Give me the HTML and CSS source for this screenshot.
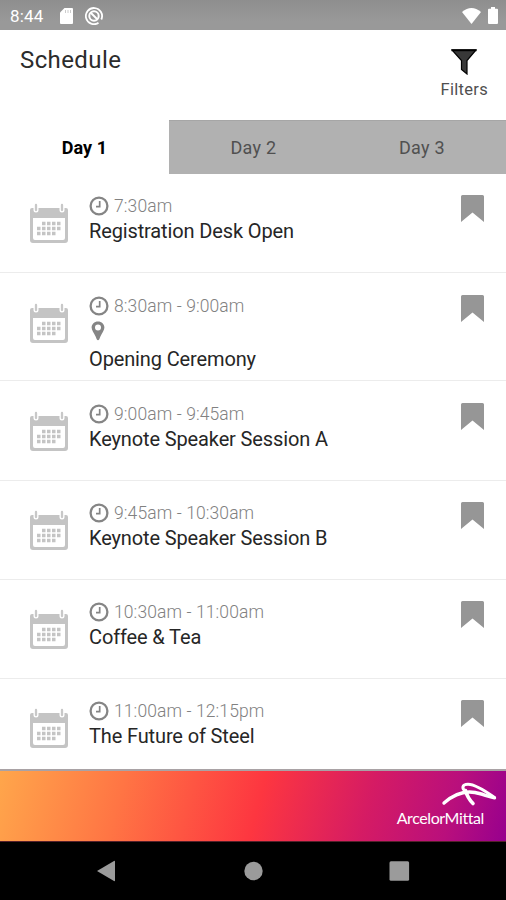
FILE: index.html
```html
<!DOCTYPE html>
<html lang="en">
<head>
<meta charset="utf-8">
<title>Schedule</title>
<link rel="stylesheet" href="styles.css">
</head>
<body>
<svg class="sprite" aria-hidden="true">
  <symbol id="calendar" viewBox="0 0 40 42">
    <path fill="#c4c4c4" fill-rule="evenodd" d="M3 6H37Q39 6 39 8V38Q39 41 36 41H4Q1 41 1 38V8Q1 6 3 6ZM4 16V36Q4 38 6 38H34Q36 38 36 36V16Z"/>
    <path d="M7 4V8M33 4V8" stroke="#fff" stroke-width="5" stroke-linecap="round"/>
    <path d="M7 3V8M33 3V8" stroke="#c8c8c8" stroke-width="2.300" stroke-linecap="round"/>
    <path d="M13 21.500H32M8 26.500H32M8 31.500H27" stroke="#c4c4c4" stroke-width="3.300" stroke-dasharray="3.500 1.500"/>
  </symbol>
  <symbol id="clock" viewBox="0 0 20 20">
    <circle cx="10" cy="10" r="8.400" fill="none" stroke="#858585" stroke-width="2.300"/>
    <path d="M10.700 5V10.700H7" fill="none" stroke="#858585" stroke-width="1.700"/>
  </symbol>
  <symbol id="pin" viewBox="0 0 14 20">
    <path fill="#858585" fill-rule="evenodd" d="M7 .5C3.300 .5 .6 3.200 .6 6.600C.6 9.500 3 12 4.600 15.500L5.700 18.300Q7 20.300 8.300 18.300L9.400 15.500C11 12 13.400 9.500 13.400 6.600C13.400 3.200 10.700 .5 7 .5ZM7 3.600A3 3 0 1 1 7 9.600A3 3 0 1 1 7 3.600Z"/>
  </symbol>
  <symbol id="bookmark" viewBox="0 0 23 27">
    <path fill="#969696" d="M1.500 0H21.500Q23 0 23 1.500V27L11.500 17.500L0 27V1.500Q0 0 1.500 0Z"/>
  </symbol>
</svg>

<div class="screen">
  <div class="status">
    <span class="status-time">8:44</span>
    <svg class="sd" viewBox="0 0 13 16"><path fill="#fff" d="M4.500 0H12Q13 0 13 1V15Q13 16 12 16H1Q0 16 0 15V4.500Z"/><path d="M5.500 2V5M8 2V5M10.500 2V5" stroke="#ccc" stroke-width="1"/></svg>
    <svg class="sync" viewBox="0 0 18 18"><g fill="none" stroke="#fff"><path stroke-width="1.800" d="M13.500 15.800A8.100 8.100 0 1 1 16.300 12.500"/><circle cx="9" cy="9" r="4.700" stroke-width="2"/><path stroke-width="2" d="M6 6L12 12"/></g></svg>
    <svg class="wifi" viewBox="0 0 19 16"><path fill="#fff" d="M0 4Q9.500 -4 19 4L9.500 16Z"/></svg>
    <svg class="battery" viewBox="0 0 10 17"><path fill="#fff" d="M3 0H7V1.700H9Q10 1.700 10 2.700V16Q10 17 9 17H1Q0 17 0 16V2.700Q0 1.700 1 1.700H3Z"/></svg>
  </div>

  <header class="header">
    <h1 class="title">Schedule</h1>
    <div class="filters">
      <svg class="funnel" viewBox="0 0 26 26"><path fill="#383838" stroke="#000" stroke-width="1.200" d="M1 1H25L16 11.500V25L10.500 20.500V11.500Z"/><path d="M.5 1.200H25.500" stroke="#000" stroke-width="2"/></svg>
      <span>Filters</span>
    </div>
  </header>

  <nav class="tabs">
    <div class="tab active">Day 1</div>
    <div class="tab">Day 2</div>
    <div class="tab">Day 3</div>
  </nav>

  <main class="list">
    <article class="item">
      <svg class="calendar"><use href="#calendar"/></svg>
      <div class="info"><div class="time"><svg class="clock"><use href="#clock"/></svg><span>7:30am</span></div><div class="name">Registration Desk Open</div></div>
      <svg class="bookmark"><use href="#bookmark"/></svg>
    </article>
    <article class="item tall">
      <svg class="calendar"><use href="#calendar"/></svg>
      <div class="info"><div class="time"><svg class="clock"><use href="#clock"/></svg><span>8:30am - 9:00am</span></div><svg class="pin"><use href="#pin"/></svg><div class="name">Opening Ceremony</div></div>
      <svg class="bookmark"><use href="#bookmark"/></svg>
    </article>
    <article class="item">
      <svg class="calendar"><use href="#calendar"/></svg>
      <div class="info"><div class="time"><svg class="clock"><use href="#clock"/></svg><span>9:00am - 9:45am</span></div><div class="name">Keynote Speaker Session A</div></div>
      <svg class="bookmark"><use href="#bookmark"/></svg>
    </article>
    <article class="item">
      <svg class="calendar"><use href="#calendar"/></svg>
      <div class="info"><div class="time"><svg class="clock"><use href="#clock"/></svg><span>9:45am - 10:30am</span></div><div class="name">Keynote Speaker Session B</div></div>
      <svg class="bookmark"><use href="#bookmark"/></svg>
    </article>
    <article class="item">
      <svg class="calendar"><use href="#calendar"/></svg>
      <div class="info"><div class="time"><svg class="clock"><use href="#clock"/></svg><span>10:30am - 11:00am</span></div><div class="name">Coffee &amp; Tea</div></div>
      <svg class="bookmark"><use href="#bookmark"/></svg>
    </article>
    <article class="item">
      <svg class="calendar"><use href="#calendar"/></svg>
      <div class="info"><div class="time"><svg class="clock"><use href="#clock"/></svg><span>11:00am - 12:15pm</span></div><div class="name">The Future of Steel</div></div>
      <svg class="bookmark"><use href="#bookmark"/></svg>
    </article>
  </main>

  <footer class="banner">
    <svg class="mark" viewBox="0 0 56 25"><g fill="none" stroke="#fff" stroke-linecap="round" stroke-linejoin="round"><path stroke-width="3.400" d="M3 21C12 13 23 8.500 34 10.500C41 11.800 47 14.500 53.500 15.800"/><path stroke-width="3" d="M53.500 15.500C43 8 33 2.200 27 2.200C21 2.200 20.500 6.500 24.500 9.500"/><path stroke-width="3.600" d="M24.500 8.500C26 14 28.500 18 32 21.500"/></g></svg>
    <span class="brand">ArcelorMittal</span>
  </footer>

  <div class="navbar">
    <svg class="key" viewBox="0 0 22 22"><path fill="#9b9b9b" d="M2 11L19 1Q20 .5 20 1.500V20.500Q20 21.500 19 21Z"/></svg>
    <svg class="key" viewBox="0 0 22 22"><circle fill="#9b9b9b" cx="11.500" cy="11" r="9.200"/></svg>
    <svg class="key" viewBox="0 0 22 22"><rect fill="#9b9b9b" x="1.500" y="1.200" width="19.600" height="19.600" rx="1.500"/></svg>
  </div>
</div>
</body>
</html>
```
FILE: styles.css
```css
* { box-sizing: border-box; }
body { margin: 0; font-family: Roboto, "Liberation Sans", sans-serif; background: #fff; }
svg { display: block; flex: none; }
.sprite { display: none; }
.screen { width: 506px; height: 900px; display: flex; flex-direction: column; overflow: hidden; }

.status { height: 30px; flex: none; display: flex; align-items: center; padding: 1px 8px 0 10px; background: linear-gradient(#8e8e8e, #999 70%); color: #fff; }
.status-time { width: 50px; font-size: 17px; letter-spacing: .2px; }
.sd { width: 13px; height: 16px; }
.sync { width: 18px; height: 18px; margin-left: 12px; }
.wifi { width: 19px; height: 16px; margin-left: auto; }
.battery { width: 10px; height: 17px; margin-left: 7px; }

.header { height: 90px; flex: none; display: flex; justify-content: space-between; padding: 15px 18px 0 20px; }
.title { margin: 0; font-size: 24px; line-height: 30px; font-weight: 400; letter-spacing: .4px; color: #2c2c2c; }
.filters { display: flex; flex-direction: column; align-items: center; font-size: 16.5px; line-height: 20px; letter-spacing: .3px; color: #505050; }
.funnel { width: 26px; height: 26px; margin: 4px 0 5px; }

.tabs { height: 54px; flex: none; display: grid; grid-template-columns: 169px 169px 168px; }
.tab { display: flex; align-items: center; justify-content: center; padding-top: 0; font-size: 18px; letter-spacing: .3px; background: #b1b1b1; border-top: 1px solid #a6a6a6; color: #505050; }
.tab.active { background: #fff; border-color: #fff; color: #000; font-weight: 700; letter-spacing: .1px; }

.list { height: 595px; flex: none; overflow: hidden; }
.item { height: 99.200px; display: flex; align-items: flex-start; padding: 21.400px 22px 0 29px; border-bottom: 1px solid #ececec; }
.item.tall { height: 108.200px; }
.calendar { width: 40px; height: 42px; margin-top: 7px; }
.info { flex: 1; margin-left: 20px; }
.time { display: flex; align-items: center; gap: 5px; height: 22px; font-size: 17.500px; line-height: 22px; letter-spacing: .1px; color: #818181; font-weight: 300; }
.clock { width: 20px; height: 20px; }
.pin { width: 14px; height: 20px; margin: 4px 0 6px 2px; }
.name { font-size: 20px; line-height: 24px; margin-top: 2px; letter-spacing: -.130px; color: #262626; white-space: nowrap; }
.bookmark { width: 23px; height: 27px; }

.banner { height: 73px; flex: none; display: flex; flex-direction: column; align-items: flex-end; padding: 11px 9px 0 0; border-top: 2px solid #a9a2a5; border-bottom: 1px solid #55202b; background: linear-gradient(105deg, #ffa64b 0%, #ff7544 24%, #fd3640 51%, #d51b64 72%, #b90f7c 88%, #97008e 100%); }
.mark { width: 56px; height: 25px; }
.brand { margin: 1px 13px 0 0; font-family: Lato, sans-serif; font-size: 16px; line-height: 20px; letter-spacing: -.4px; color: #fff; }

.navbar { flex: 1; display: flex; justify-content: space-between; align-items: center; padding: 0 96px 0 95px; background: #000; }
.key { width: 22px; height: 22px; }
```
